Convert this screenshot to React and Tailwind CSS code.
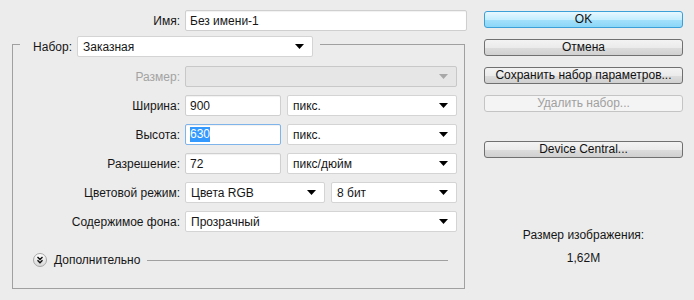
import React from 'react';

const Arrow = ({ disabled }) => (
  <svg width="9" height="5" viewBox="0 0 9 5" className="shrink-0">
    <path d="M0 0h9L4.5 5z" fill={disabled ? '#a8a8a8' : '#000'} />
  </svg>
);

const Select = ({ value, w, disabled }) => (
  <div
    className={`flex h-[21px] items-center justify-between rounded-[2px] border pl-[5px] pr-[8px] ${w} ${
      disabled ? 'border-[#c8c8c8] bg-[#e6e6e6]' : 'border-[#d4d4d4] bg-white'
    }`}
  >
    <span className="truncate">{value}</span>
    <Arrow disabled={disabled} />
  </div>
);

const Input = ({ value, w, focused }) => (
  <div
    className={`flex h-[21px] items-center rounded-[2px] border pl-[4px] shadow-[inset_0_1px_1px_rgba(0,0,0,0.06)] ${w} ${
      focused ? 'border-[#7eb4ea] bg-white' : 'border-[#cfcfcf] bg-white'
    }`}
  >
    {focused ? <span className="bg-[#3399ff] leading-[15px] text-white">{value}</span> : value}
  </div>
);

const Row = ({ label, disabled, children }) => (
  <div className="flex items-center">
    <label className={`w-[165px] pr-[5px] text-right ${disabled ? 'text-[#a3a3a3]' : ''}`}>{label}</label>
    <div className="flex gap-[6px]">{children}</div>
  </div>
);

const Btn = ({ children, primary, disabled }) => {
  let cls = 'border-[#707070] bg-[linear-gradient(#f3f3f3_0%,#ebebeb_50%,#dddddd_51%,#d0d0d0_100%)] text-[#111]';
  if (primary) cls = 'border-[#3c9fd7] bg-[linear-gradient(#e8f8ff_0%,#c5eeff_50%,#a4e1fb_51%,#8bd6f8_100%)] text-[#111]';
  if (disabled) cls = 'border-[#c4c4c4] bg-[#f4f4f4] text-[#a0a0a0]';
  return (
    <div className={`flex h-[17px] w-[199px] items-center justify-center rounded-[3px] border leading-[15px] ${cls}`}>
      {children}
    </div>
  );
};

export default function App() {
  return (
    <div className="flex h-[300px] w-[694px] bg-[#ececec] font-['Liberation_Sans',Arial,sans-serif] text-[12px] text-[#161616]">
      <div className="w-[470px] pt-[10px]">
        <div className="flex items-center">
          <label className="w-[185px] pr-[5px] text-right">Имя:</label>
          <Input value="Без имени-1" w="w-[282px]" />
        </div>

        <fieldset className="ml-[12px] w-[453px] border border-[#a0a0a0] pb-[19px] pl-[7px] pr-[7px]">
          <legend className="pt-[5px] pr-[7px]">
            <div className="flex items-center">
              <label className="w-[57px] pr-[5px] text-right">Набор:</label>
              <Select value="Заказная" w="w-[236px]" />
            </div>
          </legend>

          <div className="mt-[9px] flex flex-col gap-[8px]">
            <Row label="Размер:" disabled>
              <Select value="" w="w-[272px]" disabled />
            </Row>
            <Row label="Ширина:">
              <Input value="900" w="w-[96px]" />
              <Select value="пикс." w="w-[170px]" />
            </Row>
            <Row label="Высота:">
              <Input value="630" w="w-[96px]" focused />
              <Select value="пикс." w="w-[170px]" />
            </Row>
            <Row label="Разрешение:">
              <Input value="72" w="w-[96px]" />
              <Select value="пикс/дюйм" w="w-[170px]" />
            </Row>
            <Row label="Цветовой режим:">
              <Select value="Цвета RGB" w="w-[140px]" />
              <Select value="8 бит" w="w-[126px]" />
            </Row>
            <Row label="Содержимое фона:">
              <Select value="Прозрачный" w="w-[272px]" />
            </Row>
          </div>

          <div className="mt-[19px] flex items-center pl-[13px] pr-[9px]">
            <svg width="14" height="14" viewBox="0 0 14 14" className="shrink-0">
              <defs>
                <linearGradient id="g" x1="0" y1="0" x2="0" y2="1">
                  <stop offset="0" stopColor="#ffffff" />
                  <stop offset="1" stopColor="#d6d6d6" />
                </linearGradient>
              </defs>
              <circle cx="7" cy="7" r="6.5" fill="url(#g)" stroke="#a6a6a6" />
              <path d="M4.5 4l2.5 2.5L9.5 4M4.5 7.3l2.5 2.5 2.5-2.5" fill="none" stroke="#111" strokeWidth="1.4" />
            </svg>
            <span className="ml-[7px]">Дополнительно</span>
            <div className="ml-[7px] h-px flex-1 bg-[#a0a0a0]" />
          </div>
        </fieldset>
      </div>

      <div className="ml-[14px] flex w-[199px] flex-col pt-[11px]">
        <div className="flex flex-col gap-[11px]">
          <Btn primary>OK</Btn>
          <Btn>Отмена</Btn>
          <Btn>Сохранить набор параметров...</Btn>
          <Btn disabled>Удалить набор...</Btn>
        </div>
        <div className="mt-[29px]">
          <Btn>Device Central...</Btn>
        </div>
        <div className="mt-[68px] text-center">Размер изображения:</div>
        <div className="mt-[5px] text-center">1,62M</div>
      </div>
    </div>
  );
}
